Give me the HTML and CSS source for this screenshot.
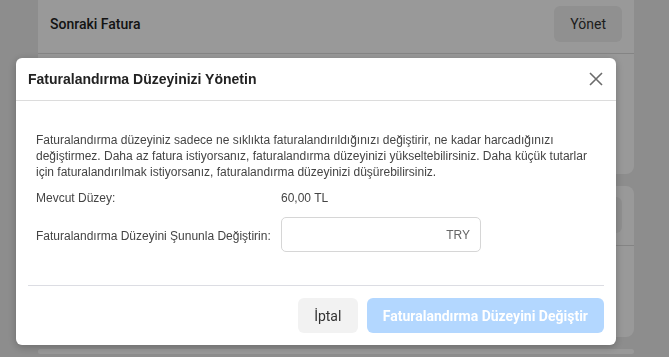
FILE: index.html
```html
<!DOCTYPE html>
<html lang="tr">

<head>
    <meta charset="UTF-8">
    <meta name="viewport" content="width=device-width, initial-scale=1.0">
    <title>Faturalandırma</title>
    <link rel="stylesheet" href="styles.css">
</head>

<body>
    <div class="page">
        <div class="card card-first">
            <div class="card-head">
                <span class="card-title">Sonraki Fatura</span>
                <button class="btn-soft">Yönet</button>
            </div>
            <div class="card-body"></div>
        </div>
        <div class="card card-second">
            <div class="card-head">
                <span class="card-title"></span>
                <button class="btn-soft">Düzenle</button>
            </div>
            <div class="card-body"></div>
        </div>
        <div class="card card-third"></div>
    </div>

    <div class="overlay">
        <div class="modal">
            <div class="modal-header">
                <h2 class="modal-title">Faturalandırma Düzeyinizi Yönetin</h2>
                <button class="modal-close" aria-label="Kapat">
                    <svg width="14" height="14" viewBox="0 0 14 14">
                        <path d="M1 1 L13 13 M13 1 L1 13" stroke="#6b6b6b" stroke-width="1.6" fill="none" />
                    </svg>
                </button>
            </div>
            <div class="modal-body">
                <div class="modal-content">
                    <p class="modal-text">Faturalandırma düzeyiniz sadece ne sıklıkta faturalandırıldığınızı değiştirir, ne kadar harcadığınızı değiştirmez. Daha az fatura istiyorsanız, faturalandırma düzeyinizi yükseltebilirsiniz. Daha küçük tutarlar için faturalandırılmak istiyorsanız, faturalandırma düzeyinizi düşürebilirsiniz.</p>
                    <div class="field-row">
                        <span class="field-label">Mevcut Düzey:</span>
                        <span class="field-value">60,00 TL</span>
                    </div>
                    <div class="field-row field-input-row">
                        <label class="field-label" for="level">Faturalandırma Düzeyini Şununla Değiştirin:</label>
                        <div class="amount-box">
                            <input type="text" id="level" class="amount-input">
                            <span class="amount-unit">TRY</span>
                        </div>
                    </div>
                </div>
                <div class="modal-footer">
                    <button class="btn-cancel">İptal</button>
                    <button class="btn-primary" disabled>Faturalandırma Düzeyini Değiştir</button>
                </div>
            </div>
        </div>
    </div>
</body>

</html>
```

FILE: styles.css
```css
body {
    margin: 0;
    padding: 0;
    background-color: #ebebeb;
    font-family: "Liberation Sans", Arial, sans-serif;
    overflow: hidden;
}

.page {
    width: 596px;
    margin-left: 38px;
    display: flex;
    flex-direction: column;
    gap: 12px;
}

.card {
    background-color: #fff;
    border-radius: 8px;
}

.card-first {
    border-radius: 0 0 8px 8px;
}

.card-head {
    display: flex;
    align-items: center;
    justify-content: space-between;
    height: 54px;
    padding: 0 12px;
    box-sizing: border-box;
    border-bottom: 1px solid #ddd;
}

.card-first .card-head {
    padding-bottom: 6px;
}

.card-second .card-head {
    height: 60px;
    padding-top: 11px;
    padding-bottom: 13px;
}

.card-title {
    font-family: Roboto, sans-serif;
    font-weight: 500;
    font-size: 14px;
    color: #222;
}

.btn-soft {
    height: 36px;
    padding: 0 16px;
    border: none;
    border-radius: 6px;
    background-color: #f0f0f0;
    font-family: Roboto, sans-serif;
    font-size: 14px;
    color: #333;
}

.card-first .card-body {
    height: 120px;
}

.card-second .card-body {
    height: 91px;
}

.card-third {
    height: 5px;
}

.overlay {
    position: fixed;
    inset: 0;
    background-color: rgba(0, 0, 0, 0.4);
}

.modal {
    position: absolute;
    left: 16px;
    top: 58px;
    width: 600px;
    height: 287px;
    background-color: #fff;
    border-radius: 6px;
    box-shadow: 0 2px 8px rgba(0, 0, 0, 0.25);
    display: flex;
    flex-direction: column;
}

.modal-header {
    display: flex;
    align-items: center;
    justify-content: space-between;
    height: 43px;
    padding: 0 12px;
    box-sizing: border-box;
    border-bottom: 1px solid #dcdcdc;
}

.modal-title {
    margin: 0;
    font-size: 14px;
    font-weight: bold;
    color: #222;
}

.modal-close {
    border: none;
    background: none;
    padding: 0;
    width: 14px;
    height: 14px;
    margin-right: 1px;
    display: flex;
}

.modal-body {
    padding: 0 12px 12px;
    display: flex;
    flex-direction: column;
    flex: 1;
}

.modal-content {
    padding: 31px 8px 0;
    flex: 1;
    border-bottom: 1px solid #dcdde3;
}

.modal-text {
    margin: 0 0 10px;
    font-size: 12px;
    line-height: 16px;
    color: #444;
}

.field-row {
    display: flex;
    align-items: center;
    font-size: 12px;
    color: #444;
    height: 16px;
}

.field-input-row {
    height: 35px;
    margin-top: 11px;
}

.field-label {
    width: 245px;
    flex-shrink: 0;
}

.field-input-row .field-label {
    margin-top: 3px;
}

.amount-box {
    position: relative;
    width: 200px;
    height: 35px;
}

.amount-input {
    width: 100%;
    height: 100%;
    box-sizing: border-box;
    border: 1px solid #d6d6d6;
    border-radius: 5px;
    padding: 0 40px 0 10px;
    font-family: inherit;
    font-size: 12px;
}

.amount-unit {
    position: absolute;
    right: 11px;
    top: 11px;
    font-size: 12px;
    color: #666;
}

.modal-footer {
    display: flex;
    justify-content: flex-end;
    gap: 9px;
    padding-top: 12px;
}

.btn-cancel {
    height: 35px;
    width: 60px;
    padding: 0;
    border: none;
    border-radius: 6px;
    background-color: #f2f2f2;
    font-family: Roboto, sans-serif;
    font-size: 14px;
    color: #333;
}

.btn-primary {
    height: 35px;
    padding: 0 16px;
    border: none;
    border-radius: 6px;
    background-color: #b3d7ff;
    font-family: Roboto, sans-serif;
    font-weight: bold;
    font-size: 14px;
    color: #fff;
}
```
